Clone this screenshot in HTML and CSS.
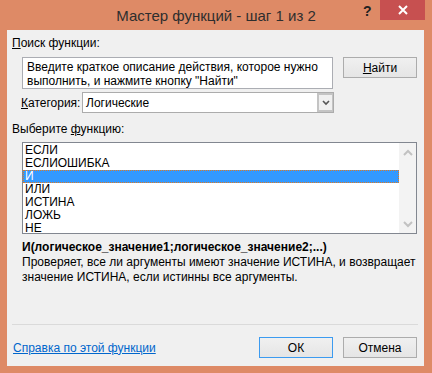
FILE: index.html
```html
<!DOCTYPE html>
<html lang="ru">
<head>
  <meta charset="UTF-8" />
  <title>Мастер функций - шаг 1 из 2</title>
  <link rel="stylesheet" href="styles.css">
</head>
<body>
  <div class="window">
    <div class="titlebar">
      <div class="title">Мастер функций - шаг 1 из 2</div>
      <div class="help">?</div>
      <div class="close">
        <svg width="10" height="10" viewBox="0 0 10 10">
          <path d="M1 1 L9 9 M9 1 L1 9" stroke="#fff" stroke-width="2" />
        </svg>
      </div>
    </div>

    <div class="client">
      <div class="label"><u>П</u>оиск функции:</div>
      <div class="search-row">
        <div class="textbox">Введите краткое описание действия, которое нужно<br>выполнить, и нажмите кнопку "Найти"</div>
        <button class="btn"><u>Н</u>айти</button>
      </div>

      <div class="category-row">
        <span class="cat-label"><u>К</u>атегория:</span>
        <div class="select">
          <span class="select-value">Логические</span>
          <span class="select-arrow">
            <svg width="8" height="6" viewBox="0 0 8 6">
              <path d="M1 1 L4 4 L7 1" stroke="#555" stroke-width="1.6" fill="none" />
            </svg>
          </span>
        </div>
      </div>

      <div class="label list-label">Выберите <u>ф</u>ункцию:</div>
      <div class="listbox">
        <ul class="items">
          <li>ЕСЛИ</li>
          <li>ЕСЛИОШИБКА</li>
          <li class="selected">И</li>
          <li>ИЛИ</li>
          <li>ИСТИНА</li>
          <li>ЛОЖЬ</li>
          <li>НЕ</li>
        </ul>
        <div class="scrollbar">
          <svg width="10" height="7" viewBox="0 0 10 7">
            <path d="M1 6 L5 2 L9 6" stroke="#c2c2c2" stroke-width="2" fill="none" />
          </svg>
          <svg width="10" height="7" viewBox="0 0 10 7">
            <path d="M1 1 L5 5 L9 1" stroke="#c2c2c2" stroke-width="2" fill="none" />
          </svg>
        </div>
      </div>

      <div class="signature">И(логическое_значение1;логическое_значение2;...)</div>
      <div class="description">Проверяет, все ли аргументы имеют значение ИСТИНА, и возвращает<br>значение ИСТИНА, если истинны все аргументы.</div>

      <div class="separator"></div>
      <div class="footer">
        <a class="help-link" href="#">Справка по этой функции</a>
        <div class="footer-buttons">
          <button class="btn btn-default">ОК</button>
          <button class="btn">Отмена</button>
        </div>
      </div>
    </div>
  </div>
</body>
</html>
```

FILE: styles.css
```css
:root {
  --frame: #de8a66;
  --client: #f0f0f0;
  --text: #000;
  --border: #acacac;
  --field-border: #abadb3;
  --select-blue: #3399ff;
  --link: #0066cc;
}
html, body {
  margin: 0;
  padding: 0;
}
body {
  background: var(--frame);
  font-family: 'Liberation Sans', Arial, sans-serif;
  font-size: 12px;
  color: var(--text);
  width: 432px;
  height: 373px;
  overflow: hidden;
  white-space: nowrap;
}
.window {
  display: flex;
  flex-direction: column;
  height: 373px;
}
.titlebar {
  height: 30px;
  position: relative;
}
.title {
  position: absolute;
  left: 0;
  right: 0;
  top: 7px;
  text-align: center;
  font-size: 15px;
  color: #2e2e2e;
}
.help {
  position: absolute;
  left: 363px;
  top: 3px;
  font-size: 14px;
  font-weight: bold;
  color: #222;
}
.close {
  position: absolute;
  left: 380px;
  top: 0;
  width: 45px;
  height: 20px;
  background: #c75050;
  display: flex;
  align-items: center;
  justify-content: center;
}
.client {
  margin: 0 8px 7px 7px;
  height: 336px;
  background: var(--client);
  padding: 0 7px 0 5px;
  box-sizing: border-box;
  display: flex;
  flex-direction: column;
}
.label {
  line-height: 15px;
  margin-top: 6px;
}
.search-row {
  display: flex;
  align-items: flex-start;
  gap: 10px;
  margin: 6px 0 0 10px;
}
.textbox {
  width: 311px;
  height: 32px;
  box-sizing: border-box;
  background: #fff;
  border: 1px solid var(--field-border);
  padding: 2px 4px;
  line-height: 14px;
}
.btn {
  width: 74px;
  height: 21px;
  box-sizing: border-box;
  border: 1px solid var(--border);
  background: linear-gradient(#f0f0f0, #e5e5e5);
  font-family: inherit;
  font-size: 12px;
  color: #000;
  padding: 0;
}
.btn-default {
  border-color: #3c9bf0;
}
.category-row {
  display: flex;
  align-items: center;
  margin: 3px 0 0 9px;
}
.cat-label {
  width: 61px;
}
.select {
  width: 252px;
  height: 21px;
  box-sizing: border-box;
  border: 1px solid var(--border);
  background: #fff;
  display: flex;
  align-items: center;
}
.select-value {
  flex: 1;
  padding-left: 3px;
}
.select-arrow {
  width: 16px;
  height: 19px;
  box-sizing: border-box;
  border: 2px solid #c4c4c4;
  border-right-width: 1px;
  background: #f0f0f0;
  display: flex;
  align-items: center;
  justify-content: center;
}
.list-label {
  margin-top: 9px;
}
.listbox {
  margin: 5px 0 0 10px;
  height: 92px;
  box-sizing: border-box;
  border: 1px solid #828790;
  background: #fff;
  display: flex;
}
.items {
  list-style: none;
  margin: 0;
  padding: 1px 0 0 0;
  flex: 1;
}
.items li {
  height: 13px;
  line-height: 13px;
  padding-left: 2px;
}
.items li.selected {
  background: var(--select-blue);
  color: #fff;
  outline: 1px dotted #e07a20;
  outline-offset: -1px;
}
.scrollbar {
  width: 17px;
  background: #f3f3f3;
  display: flex;
  flex-direction: column;
  justify-content: space-between;
  align-items: center;
  padding: 6px 0 5px 0;
}
.signature {
  margin: 6px 0 0 10px;
  line-height: 15px;
  font-weight: bold;
}
.description {
  margin-left: 10px;
  line-height: 15px;
}
.separator {
  margin: auto -1px 12px 0;
  height: 1px;
  background: #dadada;
}
.footer {
  display: flex;
  justify-content: space-between;
  align-items: center;
  margin-bottom: 8px;
}
.help-link {
  color: var(--link);
  margin-left: 1px;
}
.footer-buttons {
  display: flex;
  gap: 10px;
}
```
